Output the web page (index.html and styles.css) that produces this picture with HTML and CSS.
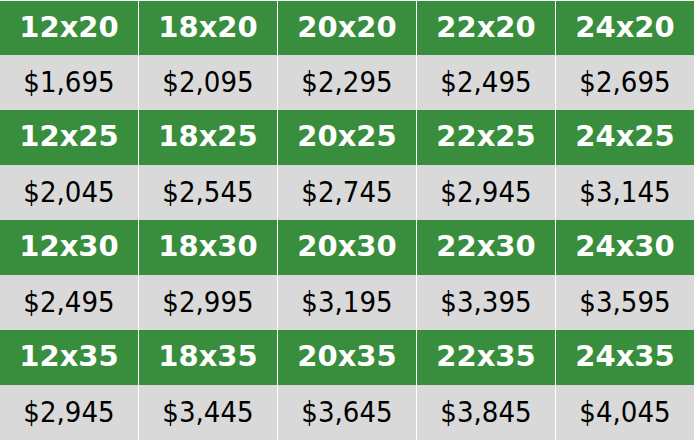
FILE: index.html
```html
<!DOCTYPE html>
<html>
<head>
<meta charset="utf-8">
<link rel="stylesheet" href="styles.css">
</head>
<body>
<div class="grid">
  <div class="size">12x20</div><div class="size">18x20</div><div class="size">20x20</div><div class="size">22x20</div><div class="size">24x20</div>
  <div class="price">$1,695</div><div class="price">$2,095</div><div class="price">$2,295</div><div class="price">$2,495</div><div class="price">$2,695</div>
  <div class="size">12x25</div><div class="size">18x25</div><div class="size">20x25</div><div class="size">22x25</div><div class="size">24x25</div>
  <div class="price">$2,045</div><div class="price">$2,545</div><div class="price">$2,745</div><div class="price">$2,945</div><div class="price">$3,145</div>
  <div class="size">12x30</div><div class="size">18x30</div><div class="size">20x30</div><div class="size">22x30</div><div class="size">24x30</div>
  <div class="price">$2,495</div><div class="price">$2,995</div><div class="price">$3,195</div><div class="price">$3,395</div><div class="price">$3,595</div>
  <div class="size">12x35</div><div class="size">18x35</div><div class="size">20x35</div><div class="size">22x35</div><div class="size">24x35</div>
  <div class="price">$2,945</div><div class="price">$3,445</div><div class="price">$3,645</div><div class="price">$3,845</div><div class="price">$4,045</div>
</div>
</body>
</html>
```
FILE: styles.css
```css
html, body {
  margin: 0;
  padding: 0;
  background: #ffffff;
}
.grid {
  width: 694px;
  height: 440px;
  box-sizing: border-box;
  padding-top: 1px;
  display: grid;
  grid-template-columns: repeat(5, 1fr);
  grid-template-rows: 54px repeat(7, 55px);
  column-gap: 1px;
}
.size, .price {
  display: flex;
  align-items: center;
  justify-content: center;
}
.size {
  background: #388e3c;
  color: #ffffff;
  font-family: "DejaVu Sans", Verdana, sans-serif;
  font-weight: bold;
  font-size: 29px;
  padding-bottom: 3px;
  box-sizing: border-box;
}
.price {
  background: #d9d9d9;
  color: #000000;
  font-family: "DejaVu Sans Condensed", "DejaVu Sans", sans-serif;
  font-stretch: condensed;
  font-size: 29px;
  padding-bottom: 2px;
  box-sizing: border-box;
}
```
